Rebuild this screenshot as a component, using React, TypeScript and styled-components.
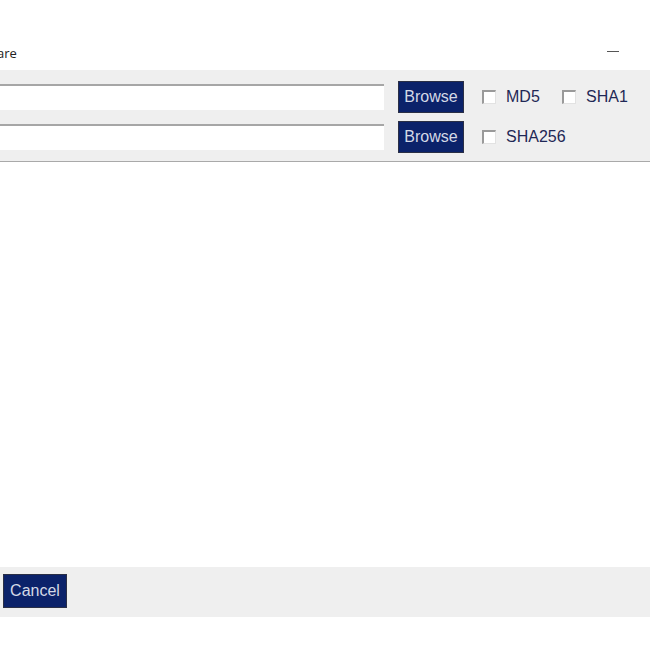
import React from "react";
import styled, { createGlobalStyle } from "styled-components";

const GlobalStyle = createGlobalStyle`
  html, body {
    margin: 0;
    padding: 0;
    background: #ffffff;
  }
  body {
    font-family: "Liberation Sans", Arial, sans-serif;
  }
`;

const Frame = styled.div`
  width: 650px;
  height: 650px;
  overflow: hidden;
  background: #ffffff;
`;

const Window = styled.div`
  margin-left: -40px;
  width: 690px;
  display: flex;
  flex-direction: column;
`;

const TitleBar = styled.div`
  height: 70px;
  display: flex;
  align-items: center;
  justify-content: space-between;
  padding: 32px 31px 0 1px;
  box-sizing: border-box;
`;

const Title = styled.span`
  font-family: "Open Sans", "Noto Sans", sans-serif;
  font-size: 13px;
  color: #222222;
  margin-top: 3px;
`;

const Minimize = styled.span`
  width: 12px;
  height: 1px;
  background: #555555;
`;

const Toolbar = styled.div`
  background: #efefef;
  height: 92px;
  box-sizing: border-box;
  padding: 11px 0 0 10px;
  border-bottom: 1px solid #a9a9a9;
  display: grid;
  grid-template-columns: 414px 66px auto;
  grid-auto-rows: 32px;
  column-gap: 14px;
  row-gap: 8px;
  align-items: center;
`;

const PathInput = styled.div`
  height: 26px;
  box-sizing: border-box;
  background: #ffffff;
  border-top: 2px solid #a6a6a6;
`;

const NavyButton = styled.button`
  height: 32px;
  width: 66px;
  padding: 0;
  background: #0b226a;
  color: #d4d9e6;
  border: 1px solid #2a2f45;
  font-family: "Liberation Sans", Arial, sans-serif;
  font-size: 16px;
  cursor: pointer;
`;

const CheckGroup = styled.div`
  display: flex;
  align-items: center;
  margin-left: 4px;
`;

const CheckItem = styled.label<{ $width?: number }>`
  display: flex;
  align-items: center;
  gap: 10px;
  width: ${(p) => (p.$width ? `${p.$width}px` : "auto")};
  font-size: 16px;
  color: #1f2856;
`;

const Box = styled.span`
  width: 14px;
  height: 14px;
  box-sizing: border-box;
  background: #ffffff;
  border-style: solid;
  border-width: 2px 1px 1px 2px;
  border-color: #9a9a9a #e2e2e2 #e2e2e2 #9a9a9a;
`;

const Content = styled.div`
  height: 405px;
  background: #ffffff;
`;

const Footer = styled.div`
  height: 50px;
  background: #efefef;
  padding: 7px 0 0 43px;
  box-sizing: border-box;
`;

const CancelButton = styled(NavyButton)`
  width: 64px;
  height: 34px;
`;

export default function App() {
  return (
    <>
      <GlobalStyle />
      <Frame>
        <Window>
          <TitleBar>
            <Title>Compare</Title>
            <Minimize />
          </TitleBar>
          <Toolbar>
            <PathInput />
            <NavyButton>Browse</NavyButton>
            <CheckGroup>
              <CheckItem $width={80}>
                <Box />
                MD5
              </CheckItem>
              <CheckItem>
                <Box />
                SHA1
              </CheckItem>
            </CheckGroup>
            <PathInput />
            <NavyButton>Browse</NavyButton>
            <CheckGroup>
              <CheckItem>
                <Box />
                SHA256
              </CheckItem>
            </CheckGroup>
          </Toolbar>
          <Content />
          <Footer>
            <CancelButton>Cancel</CancelButton>
          </Footer>
        </Window>
      </Frame>
    </>
  );
}
